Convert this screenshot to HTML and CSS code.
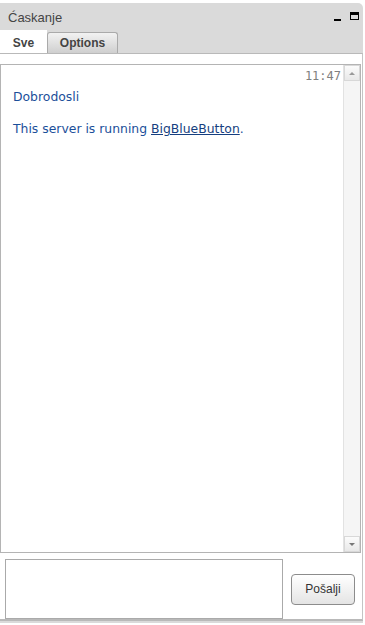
FILE: index.html
```html
<!DOCTYPE html>
<html lang="en">

<head>
    <meta charset="UTF-8">
    <meta name="viewport" content="width=device-width, initial-scale=1.0">
    <title>Ćaskanje</title>
    <link rel="stylesheet" href="styles.css">
</head>

<body>
    <div class="chat-window">
        <!-- Title bar -->
        <div class="title-bar">
            <span class="title">Ćaskanje</span>
            <div class="window-buttons">
                <span class="btn-min"></span>
                <span class="btn-max"></span>
            </div>
        </div>

        <!-- Tabs -->
        <div class="tabs">
            <div class="tab active">Sve</div>
            <div class="tab">Options</div>
        </div>

        <div class="content">
            <!-- Message list with scrollbar -->
            <div class="message-box">
                <div class="messages">
                    <div class="time">11:47</div>
                    <p class="msg">Dobrodosli</p>
                    <p class="msg">This server is running <a href="#">BigBlueButton</a>.</p>
                </div>
                <div class="scrollbar">
                    <div class="arrow up"></div>
                    <div class="track"></div>
                    <div class="arrow down"></div>
                </div>
            </div>

            <!-- Input row -->
            <div class="input-row">
                <textarea class="msg-input"></textarea>
                <button class="send-btn">Pošalji</button>
            </div>
        </div>
    </div>
</body>

</html>
```

FILE: styles.css
```css
body {
    margin: 0;
    background-color: #fff;
    font-family: "Liberation Sans", Arial, sans-serif;
}

.chat-window {
    margin-top: 3px;
    width: 363px;
    height: 620px;
    box-sizing: border-box;
    padding-bottom: 3px;
    background-color: #dadada;
    border-top-right-radius: 5px;
    display: flex;
    flex-direction: column;
}

/* Title bar */
.title-bar {
    height: 27px;
    flex-shrink: 0;
    display: flex;
    align-items: center;
    justify-content: space-between;
    padding: 0 4px 0 8px;
}

.title {
    font-size: 13px;
    color: #444;
    margin-top: 1px;
}

.window-buttons {
    display: flex;
    align-items: center;
    gap: 9px;
    margin-top: -2px;
}

.btn-min {
    width: 7px;
    height: 2px;
    background-color: #000;
    margin-top: 8px;
}

.btn-max {
    width: 7px;
    height: 4px;
    border: 1px solid #000;
    border-top-width: 3px;
}

/* Tabs */
.tabs {
    height: 23px;
    flex-shrink: 0;
    display: flex;
    align-items: flex-end;
}

.tab {
    height: 21px;
    width: 71px;
    box-sizing: border-box;
    border: 1px solid #aaa;
    border-bottom: none;
    border-radius: 3px 3px 0 0;
    background: linear-gradient(#f2f2f2, #cfcfcf);
    font-size: 12px;
    font-weight: bold;
    color: #444;
    text-align: center;
    line-height: 21px;
}

.tab.active {
    width: 47px;
    height: 23px;
    background: #fff;
    border: none;
    border-radius: 0;
    line-height: 27px;
}

/* Main white area */
.content {
    flex: 1;
    background-color: #fff;
    border-top: 1px solid #b9b9b9;
    border-right: 1px solid #c4c4c4;
    border-bottom: 2px solid #b9b9b9;
    padding-top: 10px;
    display: flex;
    flex-direction: column;
}

.message-box {
    height: 487px;
    flex-shrink: 0;
    margin-right: 1px;
    border: 1px solid #b4b4b4;
    display: flex;
}

.messages {
    flex: 1;
    padding: 0 12px;
    position: relative;
}

.time {
    position: absolute;
    top: 4px;
    right: 2px;
    font-family: "DejaVu Sans Mono", monospace;
    font-size: 12px;
    color: #808080;
}

.msg {
    margin: 0;
    padding-top: 24px;
    font-family: "DejaVu Sans", Verdana, sans-serif;
    font-size: 12.4px;
    line-height: 15px;
    color: #1b4f9a;
}

.msg + .msg {
    padding-top: 17px;
}

.msg a {
    color: #163f80;
}

/* Scrollbar */
.scrollbar {
    width: 16px;
    display: flex;
    flex-direction: column;
    border-left: 1px solid #e2e2e2;
    background-color: #f5f5f5;
}

.arrow {
    height: 16px;
    box-sizing: border-box;
    border: 1px solid #d8d8d8;
    background: linear-gradient(#fbfbfb, #e8e8e8);
    display: flex;
    align-items: center;
    justify-content: center;
}

.arrow::after {
    content: "";
    border-left: 3px solid transparent;
    border-right: 3px solid transparent;
}

.arrow.up::after {
    border-bottom: 3px solid #999;
}

.arrow.down::after {
    border-top: 3px solid #777;
}

.track {
    flex: 1;
}

/* Input row */
.input-row {
    flex: 1;
    display: flex;
    align-items: center;
    padding: 6px 7px 0 5px;
}

.msg-input {
    width: 278px;
    height: 60px;
    box-sizing: border-box;
    border: 1px solid #aaa;
    resize: none;
    margin: 0;
}

.send-btn {
    margin-left: auto;
    width: 64px;
    height: 31px;
    border: 1px solid #8c8c8c;
    border-radius: 4px;
    background: linear-gradient(#ffffff, #e4e4e4);
    font-family: "Liberation Sans", Arial, sans-serif;
    font-size: 12px;
    color: #333;
}
```
